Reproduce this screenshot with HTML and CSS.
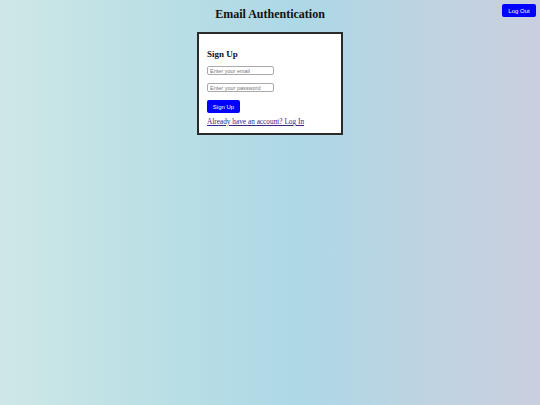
FILE: index.html
```html
<!DOCTYPE html>
<html>
<head>
<meta charset="utf-8">
<link rel="stylesheet" href="styles.css">
</head>
<body>
<header class="top">
  <div class="spacer"></div>
  <h1 class="title">Email Authentication</h1>
  <button class="btn logout">Log Out</button>
</header>
<main class="main">
  <section class="card">
    <h2 class="card-title">Sign Up</h2>
    <input class="field" type="email" placeholder="Enter your email">
    <input class="field" type="password" placeholder="Enter your password">
    <button class="btn submit">Sign Up</button>
    <a class="switch" href="#">Already have an account? Log In</a>
  </section>
</main>
</body>
</html>
```
FILE: styles.css
```css
html, body {
  margin: 0;
  height: 100%;
}
body {
  background: linear-gradient(to right, #cee7e6 0%, #badfe5 30%, #add8e6 55%, #bfd3e1 80%, #cacfdf 100%);
  font-family: "Liberation Serif", serif;
  color: #111;
}
.top {
  display: grid;
  grid-template-columns: 1fr auto 1fr;
  align-items: start;
  padding: 7px 4px 0 4px;
  height: 25px;
}
.title {
  margin: 0;
  font-size: 12px;
  line-height: 14px;
  font-weight: bold;
}
.btn {
  background: #0000ff;
  color: #fff;
  border: none;
  border-radius: 2px;
  font-family: "Liberation Sans", Arial, sans-serif;
  font-size: 6px;
  padding: 0;
  cursor: pointer;
}
.logout {
  justify-self: end;
  width: 34px;
  height: 13px;
  margin-top: -3px;
}
.main {
  display: flex;
  justify-content: center;
}
.card {
  box-sizing: border-box;
  width: 146px;
  background: #fff;
  border: 2px solid #2a2a2a;
  padding: 15px 8px 7px 8px;
  display: flex;
  flex-direction: column;
  align-items: flex-start;
}
.card-title {
  margin: 0 0 6px 0;
  font-size: 9px;
  line-height: 11px;
  font-weight: bold;
}
.field {
  box-sizing: border-box;
  width: 67px;
  height: 9px;
  margin: 0 0 8px 0;
  padding: 0 2px;
  border: 1px solid #aaa;
  border-radius: 2px;
  font-family: "Liberation Sans", Arial, sans-serif;
  font-size: 5.5px;
  outline: none;
}
.field::placeholder {
  color: #777;
}
.submit {
  width: 33px;
  height: 13px;
  margin-bottom: 4px;
}
.switch {
  font-size: 7.3px;
  line-height: 9px;
  color: #33288a;
  text-decoration: underline;
}
```
